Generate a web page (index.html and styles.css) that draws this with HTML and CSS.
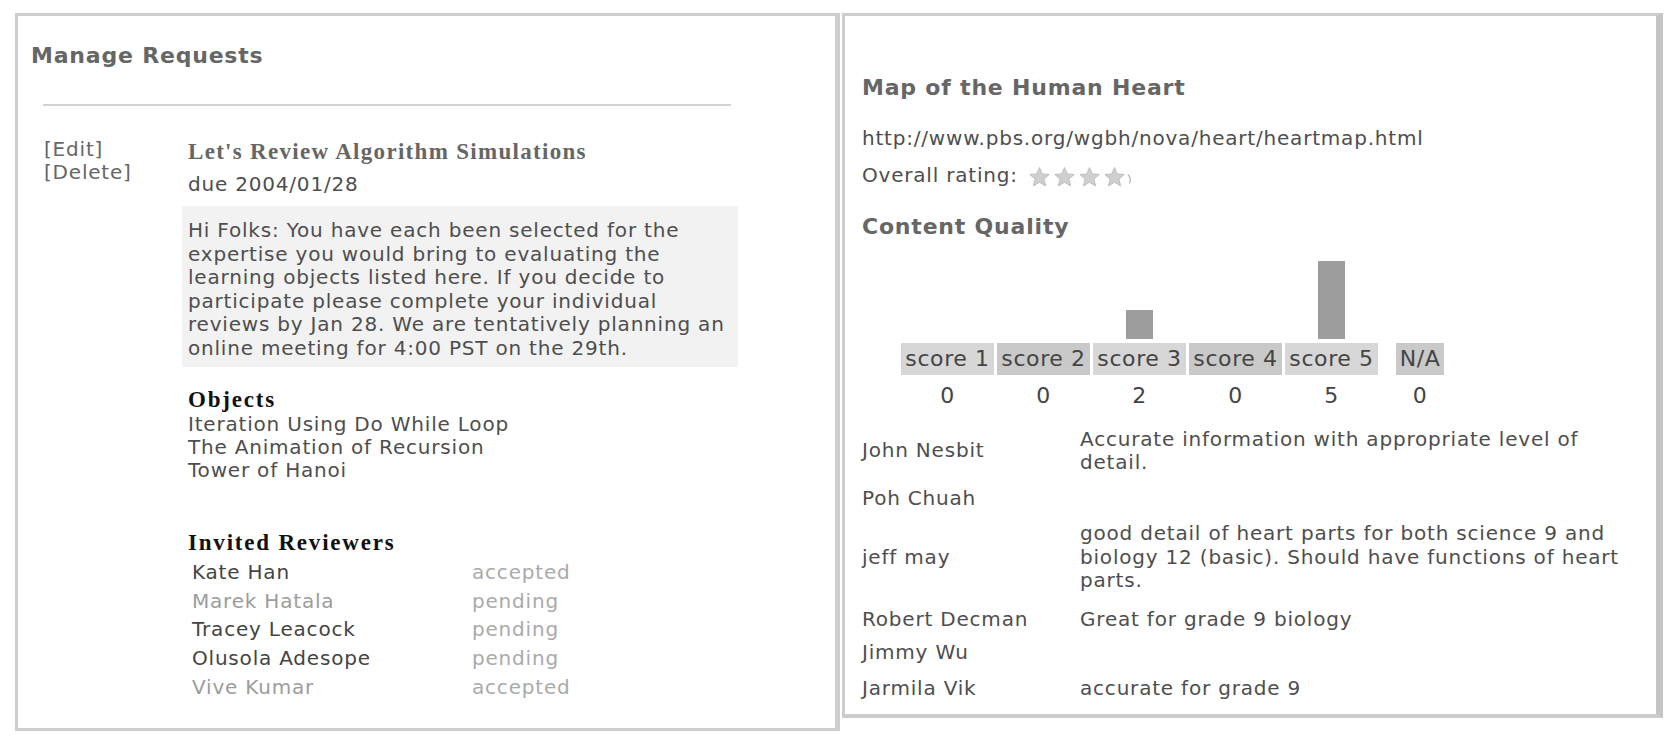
FILE: index.html
```html
<!DOCTYPE html>
<html>
<head>
<meta charset="utf-8">
<title>Manage Requests</title>
<link rel="stylesheet" href="styles.css">
</head>
<body>
<div class="page">
  <section class="panel requests">
    <h2 class="panel-title">Manage Requests</h2>
    <hr class="rule">
    <div class="request">
      <div class="actions">
        <a href="#">[Edit]</a>
        <a href="#">[Delete]</a>
      </div>
      <div class="details">
        <h3 class="req-title">Let's Review Algorithm Simulations</h3>
        <div class="due">due 2004/01/28</div>
        <p class="message">Hi Folks: You have each been selected for the<br>expertise you would bring to evaluating the<br>learning objects listed here. If you decide to<br>participate please complete your individual<br>reviews by Jan 28. We are tentatively planning an<br>online meeting for 4:00 PST on the 29th.</p>
        <h4 class="sub">Objects</h4>
        <ul class="objects">
          <li>Iteration Using Do While Loop</li>
          <li>The Animation of Recursion</li>
          <li>Tower of Hanoi</li>
        </ul>
        <h4 class="sub invited">Invited Reviewers</h4>
        <div class="reviewers">
          <span class="name">Kate Han</span><span class="status">accepted</span>
          <span class="name muted">Marek Hatala</span><span class="status">pending</span>
          <span class="name">Tracey Leacock</span><span class="status">pending</span>
          <span class="name">Olusola Adesope</span><span class="status">pending</span>
          <span class="name muted">Vive Kumar</span><span class="status">accepted</span>
        </div>
      </div>
    </div>
  </section>

  <section class="panel ratings">
    <h2 class="panel-title">Map of the Human Heart</h2>
    <div class="url">http://www.pbs.org/wgbh/nova/heart/heartmap.html</div>
    <div class="overall">
      <span>Overall rating:</span>
      <span class="stars">
        <svg class="star" viewBox="0 0 24 24"><path d="M12 2.5l2.8 6.4 6.9.6-5.2 4.6 1.6 6.8L12 17.3l-6.1 3.6 1.6-6.8-5.2-4.6 6.9-.6z"/></svg>
        <svg class="star" viewBox="0 0 24 24"><path d="M12 2.5l2.8 6.4 6.9.6-5.2 4.6 1.6 6.8L12 17.3l-6.1 3.6 1.6-6.8-5.2-4.6 6.9-.6z"/></svg>
        <svg class="star" viewBox="0 0 24 24"><path d="M12 2.5l2.8 6.4 6.9.6-5.2 4.6 1.6 6.8L12 17.3l-6.1 3.6 1.6-6.8-5.2-4.6 6.9-.6z"/></svg>
        <svg class="star" viewBox="0 0 24 24"><path d="M12 2.5l2.8 6.4 6.9.6-5.2 4.6 1.6 6.8L12 17.3l-6.1 3.6 1.6-6.8-5.2-4.6 6.9-.6z"/></svg>
        <svg class="star partial" viewBox="0 0 6 24"><path d="M1 9.5c2 2 3 5 1.5 9"/></svg>
      </span>
    </div>
    <h2 class="panel-title quality">Content Quality</h2>
    <div class="chart">
      <div class="col"><div class="bar-area"></div><div class="label light">score 1</div><div class="count">0</div></div>
      <div class="col"><div class="bar-area"></div><div class="label dark">score 2</div><div class="count">0</div></div>
      <div class="col"><div class="bar-area"><div class="bar" style="height:29px"></div></div><div class="label light">score 3</div><div class="count">2</div></div>
      <div class="col"><div class="bar-area"></div><div class="label dark">score 4</div><div class="count">0</div></div>
      <div class="col"><div class="bar-area"><div class="bar" style="height:78px"></div></div><div class="label light">score 5</div><div class="count">5</div></div>
      <div class="col na"><div class="bar-area"></div><div class="label dark">N/A</div><div class="count">0</div></div>
    </div>
    <table class="reviews">
      <tr><td class="who">John Nesbit</td><td class="comment">Accurate information with appropriate level of detail.</td></tr>
      <tr><td class="who">Poh Chuah</td><td class="comment"></td></tr>
      <tr><td class="who">jeff may</td><td class="comment">good detail of heart parts for both science 9 and biology 12 (basic). Should have functions of heart parts.</td></tr>
      <tr class="spaced"><td class="who">Robert Decman</td><td class="comment">Great for grade 9 biology</td></tr>
      <tr><td class="who">Jimmy Wu</td><td class="comment"></td></tr>
      <tr><td class="who">Jarmila Vik</td><td class="comment">accurate for grade 9</td></tr>
    </table>
  </section>
</div>
</body>
</html>
```

FILE: styles.css
```css
* { box-sizing: border-box; }

body {
  margin: 0;
  background: #fff;
  font-family: "DejaVu Sans", Verdana, sans-serif;
  font-size: 20px;
  letter-spacing: 0.8px;
  color: #4e4e4e;
}

.page {
  display: flex;
  align-items: flex-start;
  gap: 2px;
  padding: 13px 0 0 15px;
}

.panel {
  background: #fff;
  border: 3px solid #cdcdcd;
}

.panel-title {
  margin: 0;
  font-size: 22px;
  line-height: 26px;
  font-weight: bold;
  color: #666;
}

/* ---------- left panel ---------- */
.requests {
  width: 825px;
  height: 718px;
  border-right-width: 5px;
  padding: 27px 0 0 13px;
}

.rule {
  margin: 35px 0 0 12px;
  width: 688px;
  height: 0;
  border: 0;
  border-top: 2px solid #d2d2d2;
}

.request {
  display: flex;
  margin: 32px 0 0 13px;
}

.actions {
  width: 144px;
  display: flex;
  flex-direction: column;
  line-height: 23px;
}

.actions a {
  color: #666;
  text-decoration: none;
}

.details {
  width: 560px;
}

.req-title {
  margin: 0;
  font-family: "Liberation Serif", "Times New Roman", serif;
  font-size: 23px;
  line-height: 28px;
  letter-spacing: 1.3px;
  font-weight: bold;
  color: #666;
}

.due {
  margin-top: 7px;
  line-height: 23.6px;
}

.message {
  margin: 9.4px 0 0 -6px;
  width: 556px;
  padding: 13px 6px 6px;
  background: #f2f2f2;
  line-height: 23.6px;
}

.sub {
  margin: 20px 0 0;
  font-family: "Liberation Serif", "Times New Roman", serif;
  font-size: 23px;
  line-height: 26px;
  letter-spacing: 1.8px;
  font-weight: bold;
  color: #111;
}

.sub.invited {
  margin-top: 48px;
}

.objects {
  margin: 0;
  padding: 0;
  list-style: none;
  line-height: 23.3px;
}

.reviewers {
  display: grid;
  grid-template-columns: 280px auto;
  margin: 1.5px 0 0 4px;
  line-height: 28.7px;
}

.reviewers .name { color: #444; }
.reviewers .name.muted { color: #9c9c9c; }
.reviewers .status { color: #aaa; }

/* ---------- right panel ---------- */
.ratings {
  width: 821px;
  height: 705px;
  border-right: 7px solid #c4c4c4;
  border-bottom-width: 4px;
  padding: 59px 0 0 17px;
}

.url {
  margin-top: 25px;
  line-height: 24px;
}

.overall {
  margin-top: 13px;
  height: 24px;
  line-height: 24px;
  display: flex;
  align-items: center;
  gap: 9px;
}

.stars {
  display: flex;
  align-items: center;
  height: 24px;
  padding-top: 3px;
}

.star {
  width: 25px;
  height: 24px;
  fill: #cfcfcf;
  stroke: #b5b5b5;
  stroke-width: 0.8;
}

.star.partial {
  width: 6px;
  fill: none;
  stroke: #bbb;
  stroke-width: 1.4;
}

.panel-title.quality {
  margin-top: 27px;
}

.chart {
  display: flex;
  gap: 3px;
  margin-left: 39px;
}

.col {
  width: 93px;
  display: flex;
  flex-direction: column;
  align-items: center;
  font-size: 22px;
  letter-spacing: 0.6px;
}

.col.na {
  width: 48px;
  margin-left: 15px;
}

.bar-area {
  height: 99px;
  width: 100%;
  display: flex;
  align-items: flex-end;
  justify-content: center;
}

.bar {
  width: 27px;
  background: #9d9d9d;
}

.label {
  margin-top: 4px;
  width: 100%;
  text-align: center;
  line-height: 32px;
  color: #444;
  white-space: nowrap;
}

.label.light { background: #d7d7d7; }
.label.dark { background: #c9c9c9; }

.count {
  margin-top: 9px;
  line-height: 23.5px;
  color: #444;
}

.reviews {
  margin-top: 14px;
  border-collapse: collapse;
}

.reviews td {
  padding: 6px 0;
  line-height: 23.5px;
  vertical-align: middle;
}

.reviews tr.spaced td {
  padding: 9px 0 4px;
}

.reviews .who {
  width: 218px;
}

.reviews .comment {
  width: 548px;
}
```
